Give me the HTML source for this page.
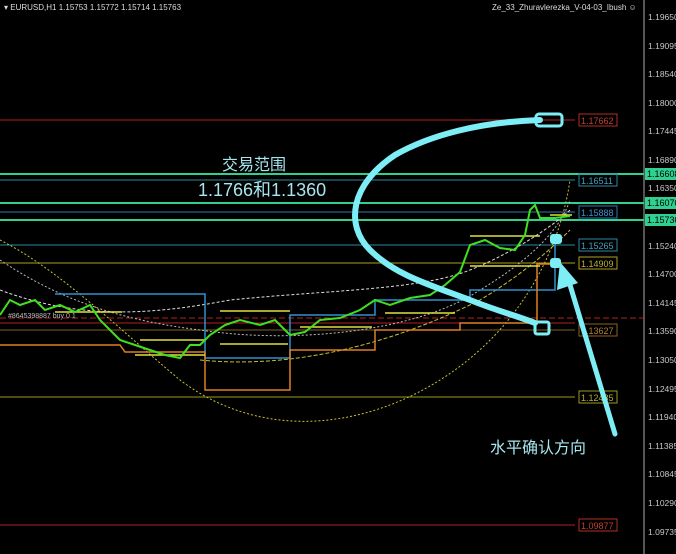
<!DOCTYPE html>
<html><head><meta charset="utf-8"><style>
html,body{margin:0;padding:0;background:#000;}
body{width:676px;height:554px;overflow:hidden;position:relative;font-family:"Liberation Sans",sans-serif;}
.ax{position:absolute;left:648px;font-size:8.5px;color:#c8c8c8;}
.t{position:absolute;color:#a6e6ee;font-family:"Liberation Sans","Noto Sans CJK SC",sans-serif;}
</style></head><body>
<svg width="676" height="554" style="position:absolute;left:0;top:0" xmlns="http://www.w3.org/2000/svg">
<line x1="644" y1="0" x2="644" y2="554" stroke="#aaa" stroke-width="1"/>
<!-- horizontal levels -->
<line x1="0" y1="120" x2="575" y2="120" stroke="#b02020"/>
<line x1="0" y1="174" x2="644" y2="174" stroke="#30d090" stroke-width="2"/>
<line x1="0" y1="180" x2="575" y2="180" stroke="#2a8aa0"/>
<line x1="0" y1="203" x2="644" y2="203" stroke="#30d090" stroke-width="2"/>
<line x1="0" y1="212" x2="575" y2="212" stroke="#2a78b0"/>
<line x1="0" y1="220" x2="644" y2="220" stroke="#30d090" stroke-width="2"/>
<line x1="0" y1="245" x2="575" y2="245" stroke="#2a8aa0"/>
<line x1="0" y1="263" x2="575" y2="263" stroke="#b0a020"/>
<line x1="0" y1="318" x2="644" y2="318" stroke="#b02020" stroke-dasharray="6,3"/>
<line x1="0" y1="323" x2="575" y2="323" stroke="#b02020"/>
<line x1="0" y1="330" x2="575" y2="330" stroke="#806020"/>
<line x1="0" y1="397" x2="575" y2="397" stroke="#9a9a20"/>
<line x1="0" y1="525" x2="575" y2="525" stroke="#b02020"/>
<!-- label boxes -->
<g font-size="9" font-family="Liberation Sans">
<rect x="579" y="114" width="38" height="12" fill="none" stroke="#b03020"/><text x="581" y="124" fill="#c04030">1.17662</text>
<rect x="579" y="174" width="38" height="12" fill="none" stroke="#2a8aa0"/><text x="581" y="184" fill="#40a0c0">1.16511</text>
<rect x="579" y="206" width="38" height="12" fill="none" stroke="#2a78b0"/><text x="581" y="216" fill="#4090d0">1.15888</text>
<rect x="579" y="239" width="38" height="12" fill="none" stroke="#2a8aa0"/><text x="581" y="249" fill="#40a0c0">1.15265</text>
<rect x="579" y="257" width="38" height="12" fill="none" stroke="#b0a020"/><text x="581" y="267" fill="#c0b030">1.14909</text>
<rect x="579" y="324" width="38" height="12" fill="none" stroke="#906020"/><text x="581" y="334" fill="#b08030">1.13627</text>
<rect x="579" y="391" width="38" height="12" fill="none" stroke="#9a9a20"/><text x="581" y="401" fill="#b0b030">1.12485</text>
<rect x="579" y="519" width="38" height="12" fill="none" stroke="#b03020"/><text x="581" y="529" fill="#c04030">1.09877</text>
<rect x="645" y="168" width="31" height="12" fill="#30d090"/><text x="647" y="177" fill="#000">1.16608</text>
<rect x="645" y="197" width="31" height="12" fill="#30d090"/><text x="647" y="206" fill="#000">1.16070</text>
<rect x="645" y="214" width="31" height="12" fill="#30d090"/><text x="647" y="223" fill="#000">1.15730</text>
</g>
<!-- dotted curves -->
<path d="M0,240 C60,270 120,330 180,380 C260,440 360,430 440,380 C520,330 560,250 570,180" fill="none" stroke="#c8c030" stroke-dasharray="2,2"/>
<path d="M0,260 C60,300 120,320 200,330 C300,345 420,330 480,290 C530,260 560,230 570,200" fill="none" stroke="#bbb" stroke-dasharray="2,2"/>
<path d="M0,290 C80,320 150,315 230,300 C330,290 420,290 470,270 C520,250 560,220 570,210" fill="none" stroke="#ddd" stroke-dasharray="3,2"/>
<path d="M200,360 C300,370 400,340 480,300 C530,270 560,240 570,230" fill="none" stroke="#c8c030" stroke-dasharray="4,2"/>
<!-- step lines -->
<polyline points="55,294 205,294 205,358 290,358 290,315 375,315 375,300 470,300 470,290 555,290 555,237" fill="none" stroke="#3090d0" stroke-width="1.5"/>
<polyline points="0,345 120,345 125,352 205,352 205,390 290,390 290,350 375,350 375,330 460,330 460,323 537,323 537,264 555,264" fill="none" stroke="#e08020" stroke-width="1.5"/>
<g stroke="#e0e040" stroke-width="1.5">
<line x1="55" y1="312" x2="122" y2="312"/><line x1="140" y1="340" x2="205" y2="340"/><line x1="220" y1="311" x2="290" y2="311"/><line x1="135" y1="355" x2="205" y2="355"/><line x1="220" y1="344" x2="288" y2="344"/><line x1="300" y1="327" x2="372" y2="327"/><line x1="385" y1="313" x2="455" y2="313"/><line x1="470" y1="236" x2="540" y2="236"/><line x1="470" y1="266" x2="540" y2="266"/><line x1="550" y1="215" x2="572" y2="215"/>
</g>
<!-- price -->
<polyline points="0,315 10,300 20,305 35,300 45,310 60,305 75,312 90,305 100,320 110,330 120,340 135,345 150,350 165,355 180,358 190,345 200,345 210,335 225,325 240,320 260,325 275,320 290,335 305,332 320,320 340,318 360,310 375,300 390,305 410,298 430,295 445,285 460,272 470,245 485,240 500,248 515,250 525,235 530,210 535,205 540,218 555,218 570,216" fill="none" stroke="#40e020" stroke-width="2"/>
<!-- cyan annotations -->
<path d="M540,120 C480,122 430,135 395,155 C350,185 345,225 370,250 C395,275 430,285 470,300 C500,312 515,315 535,323" fill="none" stroke="#7eeef6" stroke-width="6" stroke-linecap="round"/>
<rect x="536" y="114" width="26" height="12" rx="3" fill="none" stroke="#7eeef6" stroke-width="3"/>
<rect x="535" y="322" width="14" height="12" rx="2" fill="none" stroke="#7eeef6" stroke-width="3"/>
<rect x="550" y="234" width="12" height="10" rx="3" fill="#7eeef6"/>
<rect x="550" y="258" width="11" height="10" rx="3" fill="#7eeef6"/>
<line x1="615" y1="434" x2="567" y2="275" stroke="#7eeef6" stroke-width="5" stroke-linecap="round"/>
<polygon points="560,262 557,290 578,283" fill="#7eeef6"/>
<text x="4" y="10" font-size="8" fill="#ddd">▾ EURUSD,H1  1.15753 1.15772 1.15714 1.15763</text>
<text x="492" y="10" font-size="8" fill="#ddd">Ze_33_Zhuravlerezka_V-04-03_Ibush ☺</text>
<text x="8" y="318" font-size="7" fill="#bbb">#8645398887 buy 0.1</text>
</svg>
<div class="t" style="left:222px;top:151px;font-size:16px;">交易范围</div>
<div class="t" style="left:198px;top:176px;font-size:18px;">1.1766和1.1360</div>
<div class="t" style="left:490px;top:434px;font-size:16px;">水平确认方向</div>
<div class="ax" style="top:12px">1.19650</div>
<div class="ax" style="top:41px">1.19095</div>
<div class="ax" style="top:69px">1.18540</div>
<div class="ax" style="top:98px">1.18000</div>
<div class="ax" style="top:126px">1.17445</div>
<div class="ax" style="top:155px">1.16890</div>
<div class="ax" style="top:183px">1.16350</div>
<div class="ax" style="top:241px">1.15240</div>
<div class="ax" style="top:269px">1.14700</div>
<div class="ax" style="top:298px">1.14145</div>
<div class="ax" style="top:326px">1.13590</div>
<div class="ax" style="top:355px">1.13050</div>
<div class="ax" style="top:384px">1.12495</div>
<div class="ax" style="top:412px">1.11940</div>
<div class="ax" style="top:441px">1.11385</div>
<div class="ax" style="top:469px">1.10845</div>
<div class="ax" style="top:498px">1.10290</div>
<div class="ax" style="top:527px">1.09735</div>
</body></html>
